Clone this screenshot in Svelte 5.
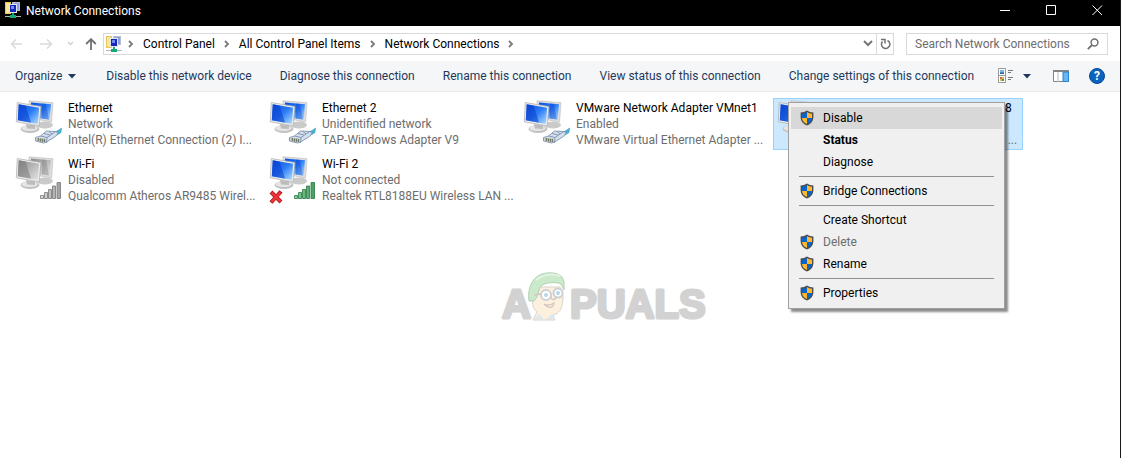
<script lang="ts">
	interface Connection {
		name: string;
		status: string;
		device: string;
		kind: 'wired' | 'wireless';
		disabled?: boolean;
		offline?: boolean;
		selected?: boolean;
	}

	interface MenuItem {
		label: string;
		shield?: boolean;
		bold?: boolean;
		disabled?: boolean;
	}

	const crumbs = ['Control Panel', 'All Control Panel Items', 'Network Connections'];

	const commands = [
		'Disable this network device',
		'Diagnose this connection',
		'Rename this connection',
		'View status of this connection',
		'Change settings of this connection'
	];

	const connections: Connection[] = [
		{ name: 'Ethernet', status: 'Network', device: 'Intel(R) Ethernet Connection (2) I...', kind: 'wired' },
		{ name: 'Ethernet 2', status: 'Unidentified network', device: 'TAP-Windows Adapter V9', kind: 'wired' },
		{ name: 'VMware Network Adapter VMnet1', status: 'Enabled', device: 'VMware Virtual Ethernet Adapter ...', kind: 'wired' },
		{ name: 'VMware Network Adapter VMnet8', status: 'Enabled', device: 'VMware Virtual Ethernet Adapter ...', kind: 'wired', selected: true },
		{ name: 'Wi-Fi', status: 'Disabled', device: 'Qualcomm Atheros AR9485 Wirel...', kind: 'wireless', disabled: true },
		{ name: 'Wi-Fi 2', status: 'Not connected', device: 'Realtek RTL8188EU Wireless LAN ...', kind: 'wireless', offline: true }
	];

	// groups are divided by a rule
	const menu: MenuItem[][] = [
		[{ label: 'Disable', shield: true }, { label: 'Status', bold: true }, { label: 'Diagnose' }],
		[{ label: 'Bridge Connections', shield: true }],
		[{ label: 'Create Shortcut' }, { label: 'Delete', shield: true, disabled: true }, { label: 'Rename', shield: true }],
		[{ label: 'Properties', shield: true }]
	];

	let active = $state('Disable');
	let query = $state('');
</script>

{#snippet folderIcon()}
	<svg class="folder" width="16" height="16" viewBox="0 0 16 16" aria-hidden="true">
		<path d="M0 0h6v12H0z" fill="#e9c65c" />
		<path d="M1 1h4v10H1z" fill="#fbe79a" />
		<path d="M7 0h8v9H7z" fill="#b9bfca" />
		<path d="M9 1h5v7H9z" fill="#8d9fe4" />
		<path d="M4 2h8v9H4z" fill="#dfe3ea" />
		<path d="M5 3h6v7H5z" fill="#1526b8" />
		<path d="M6 4h3v3H6z" fill="#6e8cf0" />
		<path d="M7 11h2v2h2v3H5v-3h2z" fill="#12a876" />
		<path d="M0 14h5v1H0zM11 14h5v1h-5z" fill="#a9b8b8" />
	</svg>
{/snippet}

{#snippet chevron()}
	<svg class="chevron" width="6" height="8" viewBox="0 0 6 8" aria-hidden="true">
		<path d="M1 1l3 3-3 3" fill="none" stroke="#7a7a7a" stroke-width="1.800" />
	</svg>
{/snippet}

{#snippet shieldIcon()}
	<svg width="14" height="16" viewBox="0 0 14 16" aria-hidden="true">
		<path d="M7 .5C5.200 1.800 3 2.400.6 2.500V7.500C.8 11.400 3.200 14 7 15.500c3.800-1.500 6.200-4.100 6.400-8V2.500C11 2.400 8.800 1.800 7 .5z" fill="#4d4d4d" />
		<path d="M7 2C5.500 3 3.800 3.500 2 3.700V8h5z" fill="#0a63c9" />
		<path d="M7 2c1.500 1 3.200 1.500 5 1.700V8H7z" fill="#ffb72e" />
		<path d="M2 8c.3 2.900 2 4.900 5 6.100V8z" fill="#ffb72e" />
		<path d="M12 8c-.3 2.900-2 4.900-5 6.100V8z" fill="#0a63c9" />
	</svg>
{/snippet}

{#snippet connectionIcon(item: Connection)}
	<svg class="device" width="48" height="48" viewBox="0 0 48 48" aria-hidden="true">
		<ellipse cx="30" cy="25" rx="8" ry="3.500" fill="#cacaca" />
		<path d="M14 .8l24 2L36.500 22 15 18z" fill="#dedede" stroke="#b8b8b8" stroke-width=".6" />
		<path d="M16 2.400l20 1.900-1.300 15.400L16 17z" fill={item.disabled ? 'url(#screen-off)' : 'url(#screen)'} />
		<path d="M27 3.500l4 .5 3 15.500-7-1z" fill={item.disabled ? '#777' : '#0638c8'} opacity=".35" />
		<ellipse cx="15" cy="29" rx="9.500" ry="4" fill="#c2c2c2" />
		<ellipse cx="14.500" cy="28.200" rx="8" ry="2.800" fill="#e6e6e6" />
		<path d="M11 24l9 1.500v3.500l-8-.5z" fill="#bdbdbd" />
		<path d="M2.300 2.500l23.600 4L24.300 26 1.300 21.800z" fill="#ececec" stroke="#aaa" stroke-width=".7" />
		<path d="M3.700 4.300l20.400 3.500L22.900 24 2.800 20.300z" fill={item.disabled ? 'url(#screen-off)' : 'url(#screen)'} />
		<path d="M3.700 4.300l7 1.200L16 22.700 2.800 20.300z" fill={item.disabled ? '#777' : '#0638c8'} opacity=".5" />
		{#if item.kind === 'wired'}
			<path d="M37 33c3-1 6-2 9.500-5l-.5 4.500c-2 1.500-4 2.500-7 3.500z" fill="#45b4d8" stroke="#258fb5" stroke-width=".5" />
			<path d="M20.500 37.500l5-1.500 6-5 8.500.5 3.500 1-3 4-9 5.500-3 1-8-2z" fill="#d4e0ee" stroke="#7187a5" stroke-width=".8" />
			<path d="M25.500 36l6.500 1.500-.5 5.500M32 37.500l8-5.500M29 33.500l6 1.500M34 31.500l3 2.500" fill="none" stroke="#7187a5" stroke-width=".8" />
			<path d="M21.500 38l9 .8v3.500l-8.500-1z" fill="#b9b98c" />
			<path d="M23.500 38v3M25.500 38.500v3M27.500 38.800v3M29.500 39v3" stroke="#5f6a62" stroke-width=".8" />
		{:else}
			<g fill={item.disabled ? 'url(#bars-off)' : 'url(#bars)'} stroke={item.disabled ? '#777' : '#287a43'} stroke-width=".8">
				<path d="M25.500 39.500h3v3h-3zM29.500 36.500h3v6h-3zM33.500 33.500h3v9h-3zM37.500 30h3v12.500h-3zM42 26.500h3.500v16H42z" />
			</g>
		{/if}
		{#if item.offline}
			<path d="M2 36l10 10M12 35.500l-10 11" fill="none" stroke="#a51419" stroke-width="4" />
			<path d="M2.500 36.500l9 9M11.500 36.500l-9 9.500" fill="none" stroke="#ee3338" stroke-width="2.600" />
		{/if}
	</svg>
{/snippet}

<svg class="defs" width="0" height="0" aria-hidden="true">
	<defs>
		<linearGradient id="screen" x1="0" y1="0" x2="1" y2="1">
			<stop offset="0" stop-color="#0b4fe0" />
			<stop offset=".5" stop-color="#2a7cf5" />
			<stop offset="1" stop-color="#b5e2ff" />
		</linearGradient>
		<linearGradient id="screen-off" x1="0" y1="0" x2="1" y2="1">
			<stop offset="0" stop-color="#8a8a8a" />
			<stop offset="1" stop-color="#e4e4e4" />
		</linearGradient>
		<linearGradient id="bars"><stop offset="0" stop-color="#8fd0a2" /><stop offset="1" stop-color="#479b60" /></linearGradient>
		<linearGradient id="bars-off"><stop offset="0" stop-color="#ddd" /><stop offset="1" stop-color="#a0a0a0" /></linearGradient>
	</defs>
</svg>

<div class="window">
	<header class="titlebar">
		{@render folderIcon()}
		<h1>Network Connections</h1>
		<div class="controls">
			<button aria-label="Minimize">
				<svg width="11" height="11" viewBox="0 0 11 11"><path d="M0 5.500h10" stroke="#fff" /></svg>
			</button>
			<button aria-label="Maximize">
				<svg width="11" height="11" viewBox="0 0 11 11"><path d="M.5.5h9v9h-9z" fill="none" stroke="#fff" /></svg>
			</button>
			<button aria-label="Close">
				<svg width="11" height="11" viewBox="0 0 11 11"><path d="M.5.5l9.500 9.500M10 .5L.5 10" stroke="#fff" /></svg>
			</button>
		</div>
	</header>

	<nav class="navbar" aria-label="Location">
		<div class="history">
			<button aria-label="Back" disabled>
				<svg width="13" height="12" viewBox="0 0 13 12"><path d="M12 6H1.500M6 1.500L1.500 6 6 10.500" fill="none" stroke="#dadada" stroke-width="1.500" /></svg>
			</button>
			<button aria-label="Forward" disabled>
				<svg width="13" height="12" viewBox="0 0 13 12"><path d="M0 6h11.500M7 1.500L11.500 6 7 10.500" fill="none" stroke="#dadada" stroke-width="1.500" /></svg>
			</button>
			<button class="recent" aria-label="Recent locations" disabled>
				<svg width="7" height="5" viewBox="0 0 7 5"><path d="M1 1l2.500 2.500L6 1" fill="none" stroke="#cfcfcf" stroke-width="1.300" /></svg>
			</button>
			<button aria-label="Up">
				<svg width="12" height="12" viewBox="0 0 12 12"><path d="M6 12V1.500M1.200 6L6 1.200 10.800 6" fill="none" stroke="#707070" stroke-width="1.800" /></svg>
			</button>
		</div>
		<div class="address">
			{@render folderIcon()}
			{@render chevron()}
			{#each crumbs as crumb}
				<button class="crumb">{crumb}</button>
				{@render chevron()}
			{/each}
			<button class="drop" aria-label="Previous locations">
				<svg width="10" height="7" viewBox="0 0 10 7"><path d="M1 1l4 4 4-4" fill="none" stroke="#777" stroke-width="2" /></svg>
			</button>
			<button class="refresh" aria-label="Refresh">
				<svg width="11" height="12" viewBox="0 0 11 12">
					<path d="M7.500 2.500a4.200 4.200 0 1 1-5 1" fill="none" stroke="#707070" stroke-width="1.500" />
					<path d="M1 1.500h4v4" fill="none" stroke="#707070" stroke-width="1.500" />
				</svg>
			</button>
		</div>
		<label class="search">
			<input type="text" placeholder="Search Network Connections" aria-label="Search Network Connections" bind:value={query} />
			<svg width="12" height="12" viewBox="0 0 12 12" aria-hidden="true">
				<circle cx="7.500" cy="4.500" r="3.400" fill="none" stroke="#707070" stroke-width="1.500" />
				<path d="M5 7L.8 11.200" stroke="#707070" stroke-width="1.800" />
			</svg>
		</label>
	</nav>

	<div class="toolbar" role="toolbar" aria-label="Commands">
		<div class="commands">
			<button class="organize">
				Organize
				<svg width="8" height="5" viewBox="0 0 8 5"><path d="M0 0h8L4 4.500z" fill="#1e395b" /></svg>
			</button>
			{#each commands as command}
				<button>{command}</button>
			{/each}
		</div>
		<div class="tools">
			<button aria-label="Change your view">
				<svg width="16" height="16" viewBox="0 0 16 16">
					<path d="M.5.5h7v14h-7zM.5 7.500h7" fill="#fff" stroke="#9a9a9a" />
					<path d="M2 2h4v4H2z" fill="#78b6ea" /><path d="M2 4.500h4V6H2z" fill="#2d62a0" />
					<path d="M2 9h4v4H2z" fill="#e9b647" /><path d="M2 9h2v2H2z" fill="#d6614c" /><path d="M4 11h2v2H4z" fill="#4b9b55" />
					<path d="M10 2.500h5M10 4.500h3M10 9.500h5M10 11.500h3" stroke="#777" />
				</svg>
			</button>
			<button class="more" aria-label="More options">
				<svg width="8" height="5" viewBox="0 0 8 5"><path d="M0 0h8L4 4.500z" fill="#1e395b" /></svg>
			</button>
			<button class="pane" aria-label="Show the preview pane">
				<svg width="16" height="12" viewBox="0 0 16 12">
					<path d="M.5.5h15v11H.5z" fill="#fff" stroke="#858585" />
					<path d="M0 0h16v2H0z" fill="#858585" />
					<path d="M5 2v10" stroke="#bbb" />
					<path d="M10 2h5.500v9.500H10z" fill="#69b5f2" stroke="#2784ce" />
				</svg>
			</button>
			<button aria-label="Help">
				<svg class="help" width="16" height="16" viewBox="0 0 16 16">
					<circle cx="8" cy="8" r="7.500" fill="#0a63bd" stroke="#084c94" />
					<text x="8" y="12" text-anchor="middle">?</text>
				</svg>
			</button>
		</div>
	</div>

	<main class="content">
		<ul class="connections">
			{#each connections as item}
				<li class="connection" class:selected={item.selected}>
					{@render connectionIcon(item)}
					<div class="details">
						<span class="name">{item.name}</span>
						<span>{item.status}</span>
						<span>{item.device}</span>
					</div>
				</li>
			{/each}
		</ul>
	</main>

	<svg class="watermark" width="212" height="64" viewBox="0 0 212 64" aria-hidden="true">
		<g class="letters">
			<text x="2" y="50">A</text>
			<text x="70" y="50">PUALS</text>
		</g>
		<path d="M33 26c-1 8-1 14 4 18l-4 8h22l-2-5c8-2 10-9 10-20l-3-8H37z" fill="#fdf0df" stroke="#d9d4cb" />
		<path d="M29 33c-2-15 5-27 18-28 9-1 16 2 17 9v8c-2-4-3-6-5-7-10-1-15 0-19 4l-3 10-3 4z" fill="#caeacb" stroke="#b2d1b3" />
		<path d="M36 12c7-5 16-7 24-4" fill="none" stroke="#e0f4e0" stroke-width="2" />
		<circle cx="46" cy="27" r="5" fill="#fff" stroke="#ccd1d6" stroke-width="2" />
		<circle cx="58" cy="25" r="4.500" fill="#fff" stroke="#ccd1d6" stroke-width="2" />
		<circle cx="46" cy="27" r="2" fill="#b7d7e6" /><circle cx="58" cy="25" r="2" fill="#b7d7e6" />
		<path d="M34 27l7-1M51 28c0 5 5 4 5 1M44 36c4 2 7 1 10-1-1 5-5 6-10 1" fill="none" stroke="#d2c8be" stroke-width="1.300" />
		<path d="M34 51l5-5 6 6 7-6 3 5" fill="#dbeaf1" />
	</svg>

	<div class="menu" role="menu">
		{#each menu as group, i}
			{#if i > 0}<hr />{/if}
			{#each group as item}
				<button
					class="menu-item"
					class:active={active === item.label}
					class:bold={item.bold}
					role="menuitem"
					disabled={item.disabled}
					onmouseenter={() => (active = item.label)}
				>
					<span class="slot">{#if item.shield}{@render shieldIcon()}{/if}</span>
					{item.label}
				</button>
			{/each}
		{/each}
	</div>
</div>

<style>
	:global(body) {
		margin: 0;
		background: #fff;
	}

	.window {
		position: relative;
		box-sizing: border-box;
		min-height: 100vh;
		border-right: 1px solid #1a1a1a;
		font-family: 'Segoe UI', Roboto, sans-serif;
		font-size: 12px;
		line-height: 16px;
		color: #000;
		overflow: hidden;
	}

	.defs {
		position: absolute;
	}

	svg {
		display: block;
		flex: none;
	}

	button {
		display: flex;
		align-items: center;
		padding: 0;
		border: 0;
		background: none;
		font: inherit;
		color: inherit;
		white-space: nowrap;
	}

	.titlebar {
		display: flex;
		align-items: center;
		height: 26px;
		padding-left: 5px;
		background: #000;
		color: #fff;
	}

	.titlebar .folder {
		margin-bottom: 6px;
	}

	h1 {
		margin: 0 0 4px 5px;
		font-size: 12px;
		font-weight: 400;
	}

	.controls {
		display: flex;
		margin-left: auto;
		margin-bottom: 6px;
	}

	.controls button {
		width: 46px;
		height: 20px;
		justify-content: center;
	}

	.navbar {
		display: flex;
		align-items: center;
		height: 35px;
		padding: 0 12px 0 10px;
	}

	.history {
		display: flex;
		width: 93px;
		gap: 17px;
	}

	.history .recent {
		margin: 0 -6px 0 -3px;
	}

	.address {
		display: flex;
		flex: 1;
		align-items: center;
		box-sizing: border-box;
		height: 22px;
		padding-left: 2px;
		border: 1px solid #d9d9d9;
	}

	.address .chevron {
		margin: 0 6px;
	}

	.address .crumb {
		margin: 0 3px;
	}

	.drop {
		margin: 0 3px 0 auto;
	}

	.refresh {
		width: 17px;
		height: 20px;
		justify-content: center;
		border-left: 1px solid #d9d9d9;
	}

	.search {
		display: flex;
		align-items: center;
		box-sizing: border-box;
		width: 202px;
		height: 22px;
		margin-left: 12px;
		padding: 0 8px;
		border: 1px solid #d9d9d9;
	}

	.search input {
		flex: 1;
		min-width: 0;
		padding: 0;
		border: 0;
		outline: 0;
		background: none;
		font: inherit;
	}

	.search input::placeholder {
		color: #6d6d6d;
		opacity: 1;
	}

	.toolbar {
		display: flex;
		align-items: center;
		justify-content: space-between;
		height: 30px;
		padding: 0 15px;
		border-bottom: 1px solid #ececec;
		background: #f5f6f7;
		color: #1e395b;
	}

	.commands {
		display: flex;
		gap: 28px;
	}

	.organize {
		gap: 6px;
		padding-right: 2px;
	}

	.tools {
		display: flex;
		align-items: center;
	}

	.tools .more {
		margin: 0 22px 0 9px;
	}

	.tools .pane {
		margin-right: 20px;
	}

	.help text {
		font-size: 12px;
		font-weight: 700;
		fill: #fff;
	}

	.content {
		padding: 6px 11px;
	}

	.connections {
		display: grid;
		grid-template-columns: repeat(auto-fill, 250px);
		gap: 4px;
		margin: 0;
		padding: 0;
		list-style: none;
	}

	.connection {
		display: flex;
		box-sizing: border-box;
		height: 52px;
		gap: 5px;
		padding: 1px 3px;
		border: 1px solid transparent;
	}

	.connection.selected {
		border-color: #99d1ff;
		background: #cce8ff;
	}

	.details {
		display: flex;
		flex-direction: column;
		white-space: nowrap;
		color: #6d6d6d;
	}

	.name {
		color: #000;
	}

	.watermark {
		position: absolute;
		top: 268px;
		left: 500px;
	}

	.letters {
		font-family: 'Liberation Sans', sans-serif;
		font-size: 40px;
		font-weight: 700;
		fill: #d2d2d2;
		stroke: #d2d2d2;
		stroke-width: 3px;
		stroke-linejoin: round;
	}

	.menu {
		position: absolute;
		top: 102px;
		left: 788px;
		box-sizing: border-box;
		width: 217px;
		padding: 4px 2px;
		border: 1px solid #a0a0a0;
		background: #f0f0f0;
		box-shadow: 3px 3px 2px rgba(0, 0, 0, 0.45);
	}

	.menu-item {
		width: 100%;
		height: 22px;
	}

	.menu-item.active {
		background: #d8d8d8;
	}

	.menu-item.bold {
		font-weight: 700;
	}

	.menu-item:disabled {
		color: #6d6d6d;
	}

	.slot {
		width: 23px;
		padding-left: 9px;
	}

	hr {
		height: 1px;
		margin: 3px 8px;
		border: 0;
		background: #919191;
	}
</style>
